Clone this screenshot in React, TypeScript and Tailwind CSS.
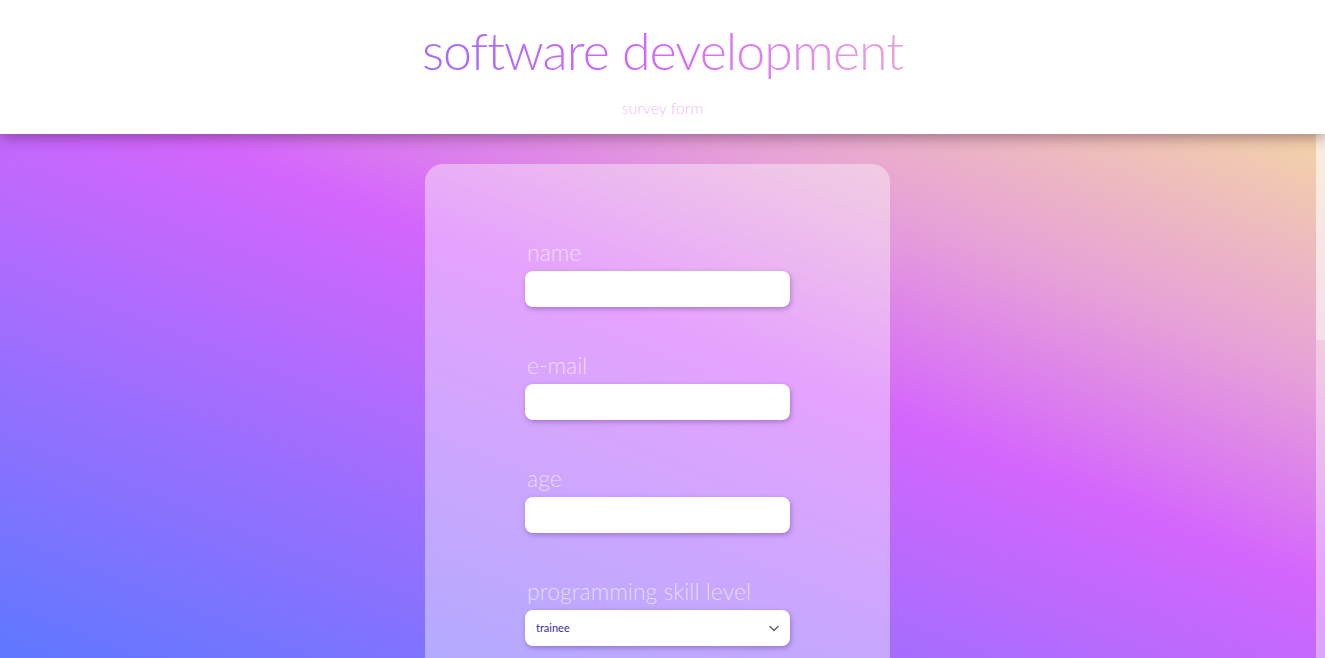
import React from "react";

const labelCls =
  "block text-[23px] leading-[30px] font-light text-white/60 pl-[2px] mb-[4px]";
const inputCls =
  "block w-full h-[36px] rounded-[8px] bg-white border-0 outline-none px-[11px] text-[11px] text-[#3b2c9e] shadow-[1px_2px_5px_rgba(70,30,120,0.35)]";

function Field({ label, type = "text" }: { label: string; type?: string }) {
  return (
    <div className="mb-[43px]">
      <label className={labelCls}>{label}</label>
      <input type={type} className={inputCls} />
    </div>
  );
}

export default function App() {
  return (
    <div
      className="h-screen flex flex-col overflow-hidden"
      style={{ fontFamily: "Lato, 'Open Sans', sans-serif" }}
    >
      <header className="relative z-10 h-[134px] shrink-0 bg-white shadow-[0_3px_14px_rgba(60,20,60,0.45)] flex flex-col items-center">
        <h1 className="mt-[18px] text-[52px] leading-[64px] tracking-[-1px] font-light bg-[linear-gradient(to_right,#a36bff,#d468fc_50%,#eba2dc)] bg-clip-text text-transparent">
          software development
        </h1>
        <p className="mt-[16px] text-[16px] leading-[20px] font-light text-[#efbdfb]">
          survey form
        </p>
      </header>
      <div className="flex-1 min-h-0 flex bg-[linear-gradient(to_top_right,#5e78ff_0%,#d466fc_57%,#e6a0d8_76%,#f4d4a6_100%)]">
        <div className="flex-1 min-w-0 h-full overflow-hidden">
          <div className="flex justify-center py-[30px] pr-[1px]">
            <form className="w-[465px] min-h-[1273px] rounded-[18px] bg-white/40 px-[100px] pt-[73px] pb-[40px]">
              <Field label="name" />
              <Field label="e-mail" type="email" />
              <Field label="age" type="number" />
              <div className="mb-[43px]">
                <label className={labelCls}>programming skill level</label>
                <div className="relative">
                  <select className={inputCls + " appearance-none"} defaultValue="trainee">
                    <option value="trainee">trainee</option>
                    <option value="junior">junior</option>
                    <option value="middle">middle</option>
                    <option value="senior">senior</option>
                  </select>
                  <svg
                    className="absolute right-[11px] top-[15px] pointer-events-none"
                    width="10"
                    height="7"
                    viewBox="0 0 10 7"
                    fill="none"
                  >
                    <path d="M1 1.5 L5 5.5 L9 1.5" stroke="#666" strokeWidth="1.5" strokeLinecap="round" strokeLinejoin="round" />
                  </svg>
                </div>
              </div>
              <div className="mb-[43px]">
                <label className={labelCls}>favorite language</label>
                <div className="flex flex-col gap-[8px] text-[16px] font-light text-white/80">
                  <label className="flex items-center gap-[8px]"><input type="radio" name="lang" /> JavaScript</label>
                  <label className="flex items-center gap-[8px]"><input type="radio" name="lang" /> Python</label>
                  <label className="flex items-center gap-[8px]"><input type="radio" name="lang" /> Java</label>
                  <label className="flex items-center gap-[8px]"><input type="radio" name="lang" /> C++</label>
                </div>
              </div>
              <div className="mb-[43px]">
                <label className={labelCls}>interests</label>
                <div className="flex flex-col gap-[8px] text-[16px] font-light text-white/80">
                  <label className="flex items-center gap-[8px]"><input type="checkbox" /> front-end</label>
                  <label className="flex items-center gap-[8px]"><input type="checkbox" /> back-end</label>
                  <label className="flex items-center gap-[8px]"><input type="checkbox" /> mobile</label>
                  <label className="flex items-center gap-[8px]"><input type="checkbox" /> devops</label>
                </div>
              </div>
              <div className="mb-[43px]">
                <label className={labelCls}>comments</label>
                <textarea className="block w-full h-[120px] rounded-[8px] bg-white border-0 outline-none p-[11px] text-[11px] shadow-[1px_2px_5px_rgba(70,30,120,0.35)] resize-none" />
              </div>
              <button type="button" className="block w-full h-[40px] rounded-[8px] bg-white/70 text-[18px] font-light text-[#b46af5] shadow-[1px_2px_5px_rgba(70,30,120,0.35)]">
                submit
              </button>
            </form>
          </div>
        </div>
        <div className="w-[9px] shrink-0 h-full bg-white/40">
          <div className="h-[206px] bg-white/35" />
        </div>
      </div>
    </div>
  );
}
